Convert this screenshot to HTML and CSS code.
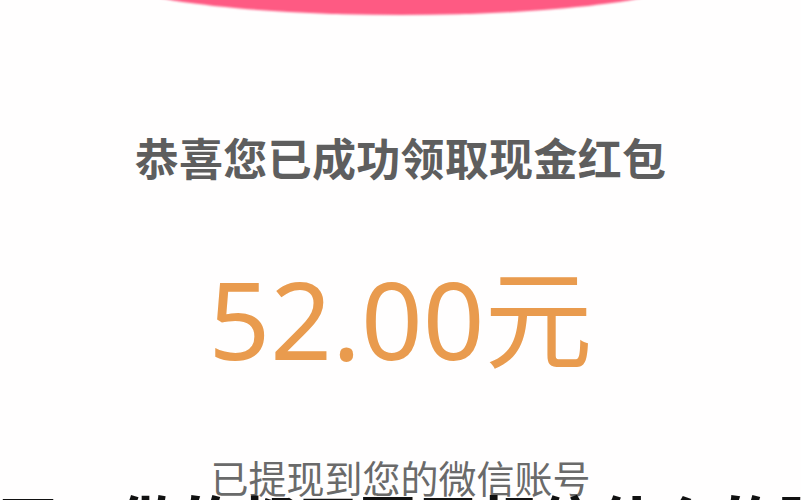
FILE: index.html
```html
<!DOCTYPE html>
<html lang="zh-CN">
<head>
<meta charset="utf-8">
<link rel="stylesheet" href="styles.css">
</head>
<body>
<div class="page">
  <div class="arc"></div>
  <h1 class="title">恭喜您已成功领取现金红包</h1>
  <div class="amount">52.00元</div>
  <p class="note">已提现到您的微信账号</p>
  <div class="subtitle">下，做的都不要再相信什么的骗局了</div>
</div>
</body>
</html>
```
FILE: styles.css
```css
html, body {
  margin: 0;
  padding: 0;
  background: #ffffff;
}
.page {
  position: relative;
  width: 801px;
  height: 500px;
  overflow: hidden;
  background: #fffefe;
  display: flex;
  flex-direction: column;
  align-items: center;
  font-family: "Noto Sans CJK SC", sans-serif;
}
.arc {
  width: 590px;
  height: 80px;
  margin-top: -65px;
  border-radius: 50%;
  background: #fe5a83;
  filter: blur(1px);
  flex: none;
}
.title {
  margin: 112px 0 0;
  font-size: 44px;
  line-height: 60px;
  font-weight: 700;
  color: #5e5e5e;
  letter-spacing: 0.3px;
}
.amount {
  margin-top: 72px;
  font-family: "Noto Sans", "Noto Sans CJK SC", sans-serif;
  font-size: 108px;
  line-height: 120px;
  color: #e99b4e;
}
.note {
  margin: 73px 0 0;
  font-size: 38px;
  line-height: 50px;
  color: #6a6a6a;
}
.subtitle {
  position: absolute;
  left: 0;
  top: 484px;
  white-space: nowrap;
  font-size: 56px;
  line-height: 70px;
  font-weight: 900;
  color: #111;
  letter-spacing: 4px;
}
```
